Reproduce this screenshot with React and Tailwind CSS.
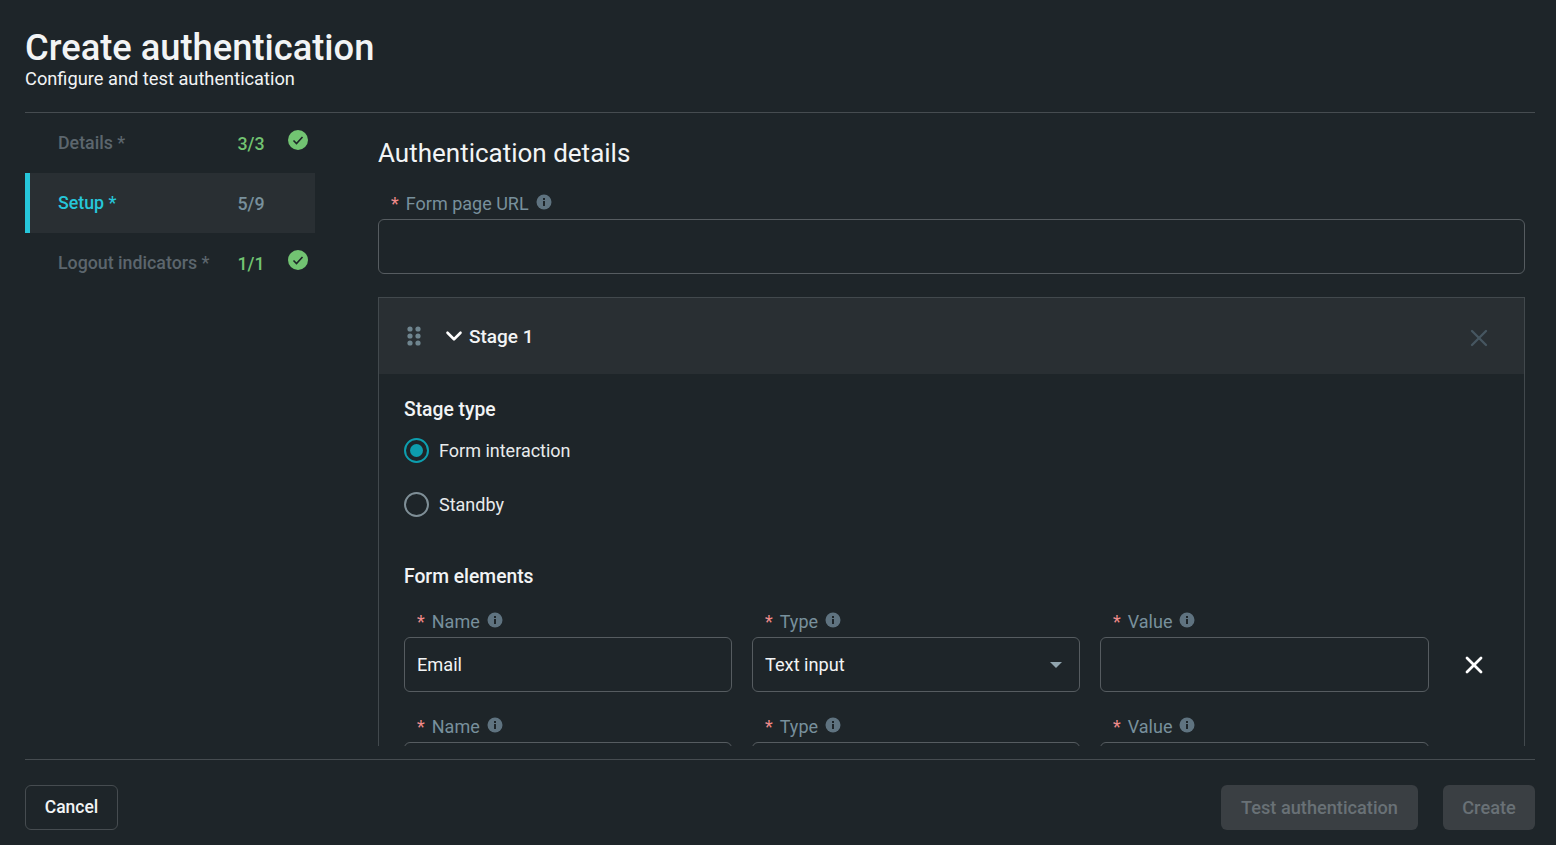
import React from 'react';
import { ChevronDown, X } from 'lucide-react';

const InfoIcon = ({ className = '' }) => (
  <svg viewBox="0 0 16 16" className={`w-4 h-4 ${className}`}>
    <circle cx="8" cy="8" r="7.5" fill="#5f7380" />
    <rect x="7" y="7" width="2" height="5" fill="#1e2529" />
    <rect x="7" y="4" width="2" height="2" fill="#1e2529" />
  </svg>
);

const CheckIcon = () => (
  <svg viewBox="0 0 20 20" className="w-5 h-5">
    <circle cx="10" cy="10" r="10" fill="#72c472" />
    <path d="M5.5 10.5l3 3 6-6.5" fill="none" stroke="#1e2529" strokeWidth="1.6" />
  </svg>
);

const StepRow = ({ label, count, active, done }) => (
  <div className={`h-[60px] flex items-center relative ${active ? 'bg-[#292f33]' : ''}`}>
    {active && <span className="absolute left-0 top-0 w-[5px] h-full bg-[#26c6da]" />}
    <span className={`ml-[33px] mt-[1px] text-[17.8px] font-medium ${active ? 'text-[#26c6da]' : 'text-[#5c666d]'}`}>{label}</span>
    <span className={`absolute left-[196px] top-[18px] w-[60px] text-center text-[17.8px] font-medium ${active ? 'text-[#78909c]' : 'text-[#72c472]'}`}>
      {count}
    </span>
    {done && (
      <span className="absolute left-[263px] top-[17px]">
        <CheckIcon />
      </span>
    )}
  </div>
);

const FieldLabel = ({ children }) => (
  <div className="h-6 flex items-center gap-[7px] pl-[13px] text-[18px] text-[#78909c]">
    <span className="text-[#ef8a8a]">*</span>
    <span>{children}</span>
    <InfoIcon className="-mt-[2px]" />
  </div>
);

const Field = ({ label, value, select }) => (
  <div className="flex flex-col gap-1">
    <FieldLabel>{label}</FieldLabel>
    <div className="h-[55px] shrink-0 rounded-md border border-[#565c60] px-3 flex items-center justify-between text-[18.2px] text-[#f2f4f5]">
      <span>{value}</span>
      {select && (
        <svg viewBox="0 0 12 6" className="w-3 h-[6px] mr-[5px]">
          <path d="M0 0h12L6 6z" fill="#90a4ae" />
        </svg>
      )}
    </div>
  </div>
);

const Radio = ({ label, checked }) => (
  <div className="flex items-center gap-[10px] h-[25px]">
    <span className={`w-[25px] h-[25px] rounded-full border-2 flex items-center justify-center ${checked ? 'border-[#0d9eae]' : 'border-[#7f8f97]'}`}>
      {checked && <span className="w-[13px] h-[13px] rounded-full bg-[#0d9eae]" />}
    </span>
    <span className="text-[18px] text-[#e8ebec]">{label}</span>
  </div>
);

const FormRow = ({ name, type, removable }) => (
  <div className="grid grid-cols-[328px_328px_329px] gap-x-5 relative">
    <Field label="Name" value={name} />
    <Field label="Type" value={type} select />
    <Field label="Value" />
    {removable && (
      <X className="absolute left-[1056px] top-[42px] w-7 h-7 text-white" strokeWidth={2.4} />
    )}
  </div>
);

export default function App() {
  return (
    <div className="h-[845px] w-[1556px] overflow-hidden bg-[#1e2529] pl-[25px] pr-[21px] flex flex-col font-['Roboto',sans-serif]">
      {/* Header */}
      <div className="h-[113px] shrink-0 border-b border-[#464c50] pt-[27px]">
        <h1 className="text-[36.3px] leading-[42px] font-medium text-[#f2f4f5]">Create authentication</h1>
        <p className="-mt-[1px] text-[18.25px] leading-[22px] text-[#f2f4f5]">Configure and test authentication</p>
      </div>

      <div className="h-[633px] shrink-0 flex">
        {/* Steps */}
        <div className="w-[290px] shrink-0">
          <StepRow label="Details *" count="3/3" done />
          <StepRow label="Setup *" count="5/9" active />
          <StepRow label="Logout indicators *" count="1/1" done />
        </div>

        {/* Main */}
        <div className="ml-[63px] w-[1147px] overflow-hidden">
          <h2 className="mt-[22px] text-[26px] leading-[36px] text-[#f2f4f5]">Authentication details</h2>
          <div className="mt-[20px] flex flex-col gap-1">
            <FieldLabel>Form page URL</FieldLabel>
            <div className="h-[55px] rounded-md border border-[#565c60]" />
          </div>

          <div className="mt-[23px] border border-b-0 border-[#42494d]">
            <div className="h-[76px] bg-[#292f33] flex items-center pl-[28px] pr-[31px]">
              <svg viewBox="0 0 14 20" className="w-[14px] h-5">
                <circle cx="3" cy="3" r="2.6" fill="#6f858f" />
                <circle cx="11" cy="3" r="2.6" fill="#6f858f" />
                <circle cx="3" cy="10" r="2.6" fill="#6f858f" />
                <circle cx="11" cy="10" r="2.6" fill="#6f858f" />
                <circle cx="3" cy="17" r="2.6" fill="#6f858f" />
                <circle cx="11" cy="17" r="2.6" fill="#6f858f" />
              </svg>
              <ChevronDown className="ml-[20px] w-[26px] h-[26px] text-white" strokeWidth={2.4} />
              <span className="ml-[2px] mt-[2px] text-[19px] font-medium text-[#f2f4f5]">Stage 1</span>
              <X className="ml-auto mt-[3px] w-7 h-7 text-[#465660]" strokeWidth={2} />
            </div>

            <div className="pl-[25px]">
              <div className="mt-[24px] text-[19.3px] leading-6 font-medium text-[#f2f4f5]">Stage type</div>
              <div className="mt-[16px] flex flex-col gap-[29px]">
                <Radio label="Form interaction" checked />
                <Radio label="Standby" />
              </div>
              <div className="mt-[48px] text-[19.3px] leading-6 font-medium text-[#f2f4f5]">Form elements</div>
              <div className="mt-[20px] flex flex-col gap-[22px]">
                <FormRow name="Email" type="Text input" removable />
                <FormRow />
              </div>
            </div>
          </div>
        </div>
      </div>

      {/* Footer */}
      <div className="mt-[13px] border-t border-[#464c50] pt-[25px] flex items-center justify-between">
        <button className="h-[45px] w-[93px] rounded-md border border-[#464c50] text-[17.5px] font-medium text-[#f2f4f5]">Cancel</button>
        <div className="flex gap-[25px]">
          <button className="h-[45px] w-[197px] rounded-md bg-[#3a3f43] text-[18.2px] font-medium text-[#697176]">Test authentication</button>
          <button className="h-[45px] w-[92px] rounded-md bg-[#3a3f43] text-[18.2px] font-medium text-[#697176]">Create</button>
        </div>
      </div>
    </div>
  );
}
